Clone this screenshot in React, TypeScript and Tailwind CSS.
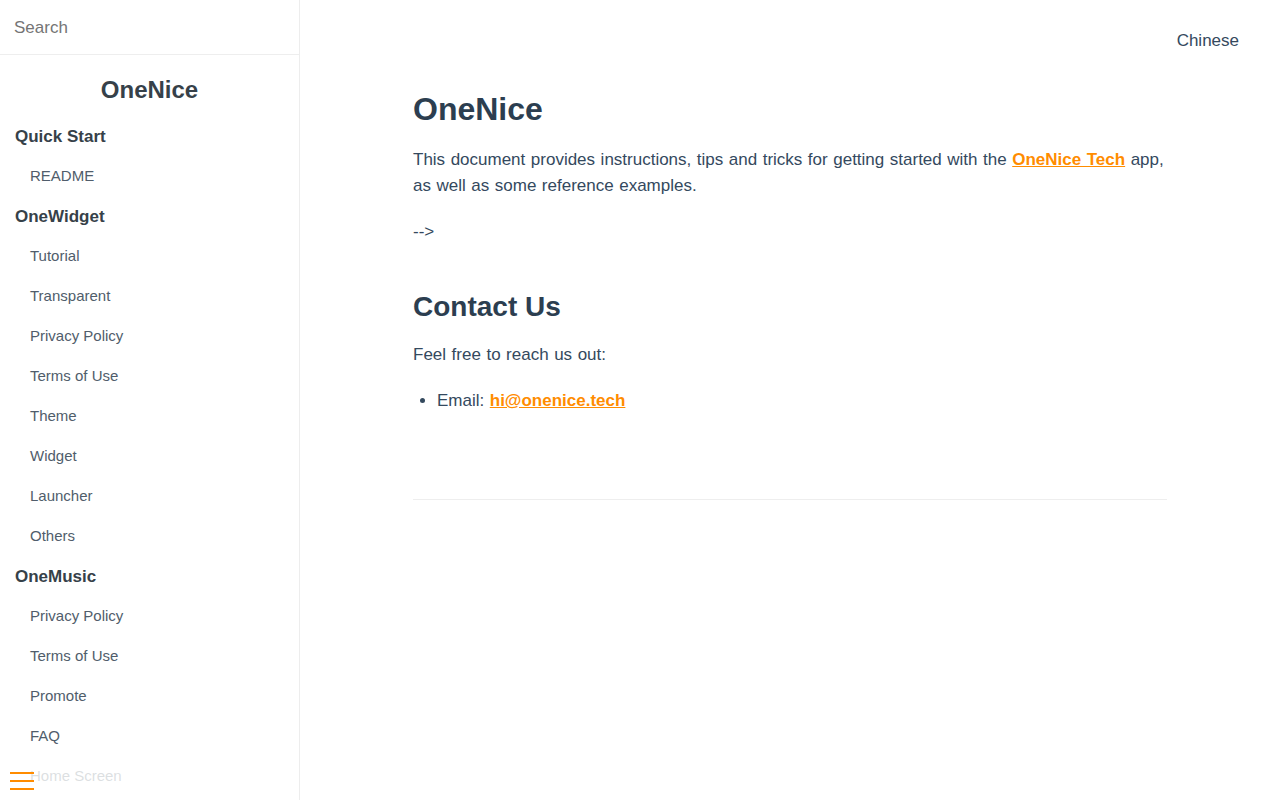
const sections = [
  { title: "Quick Start", items: ["README"] },
  {
    title: "OneWidget",
    items: ["Tutorial", "Transparent", "Privacy Policy", "Terms of Use", "Theme", "Widget", "Launcher", "Others"],
  },
  { title: "OneMusic", items: ["Privacy Policy", "Terms of Use", "Promote", "FAQ", "Home Screen", "Lyrics"] },
];

const Sidebar = () => {
  return (
    <aside className="relative w-[300px] shrink-0 h-screen overflow-hidden border-r border-[#ededed] bg-white">
      {/* search */}
      <div className="h-[55px] border-b border-[#eee] px-[14px] pt-[2px] flex items-center">
        <input
          type="text"
          placeholder="Search"
          className="w-full text-[17px] leading-[22px] outline-none placeholder:text-[#757575] bg-transparent"
        />
      </div>

      <h1 className="mt-[17px] mb-2 h-9 leading-9 text-center text-[24px] font-bold text-[#364149]">OneNice</h1>

      <ul>
        {sections.map((s) => (
          <li key={s.title}>
            <div className="h-10 flex items-center pl-[15px] pt-[1px] text-[17px] font-bold text-[#364149]">
              {s.title}
            </div>
            <ul>
              {s.items.map((it) => (
                <li key={it} className="h-10 flex items-center pl-[30px] text-[15px] text-[#505d6b]">
                  {it}
                </li>
              ))}
            </ul>
          </li>
        ))}
      </ul>

      {/* toggle over the bottom of the list */}
      <button className="absolute bottom-0 left-0 w-[284px] bg-white/80 p-[10px] flex flex-col gap-[6px]">
        <span className="block w-6 h-[2px] bg-[#ff8c00]" />
        <span className="block w-6 h-[2px] bg-[#ff8c00]" />
        <span className="block w-6 h-[2px] bg-[#ff8c00]" />
      </button>
    </aside>
  );
};

export default function App() {
  return (
    <div className="flex w-full h-screen overflow-hidden bg-white text-[17px] text-[#34495e] font-['Liberation_Sans',Arial,sans-serif]">
      <Sidebar />
      <main className="flex-1 h-screen overflow-hidden">
        <nav className="flex justify-end pt-[31px] pr-[41px]">
          <a className="h-5 leading-5 text-[#34495e]">Chinese</a>
        </nav>

        <section className="mx-auto w-[80%] px-[15px] mt-[38px] [word-spacing:0.8px]">
          <h1 className="h-10 leading-10 text-[32px] font-bold text-[#2c3e50] [word-spacing:0]">OneNice</h1>
          <p className="mt-[18px] leading-[26px]">
            This document provides instructions, tips and tricks for getting started with the{" "}
            <a className="font-bold text-[#ff8c00] underline">OneNice Tech</a> app, as well as some reference examples.
          </p>
          <p className="mt-5 leading-[26px]">--&gt;</p>

          <h2 className="mt-[45px] h-[34px] leading-[34px] text-[28px] font-bold text-[#2c3e50] [word-spacing:0]">
            Contact Us
          </h2>
          <p className="mt-[18px] leading-[26px]">Feel free to reach us out:</p>
          <ul className="mt-5 pl-6 list-disc leading-[26px]">
            <li>
              Email: <a className="font-bold text-[#ff8c00] underline">hi@onenice.tech</a>
            </li>
          </ul>

          <hr className="mt-[85px] border-0 border-t border-[#eee]" />
        </section>
      </main>
    </div>
  );
}
